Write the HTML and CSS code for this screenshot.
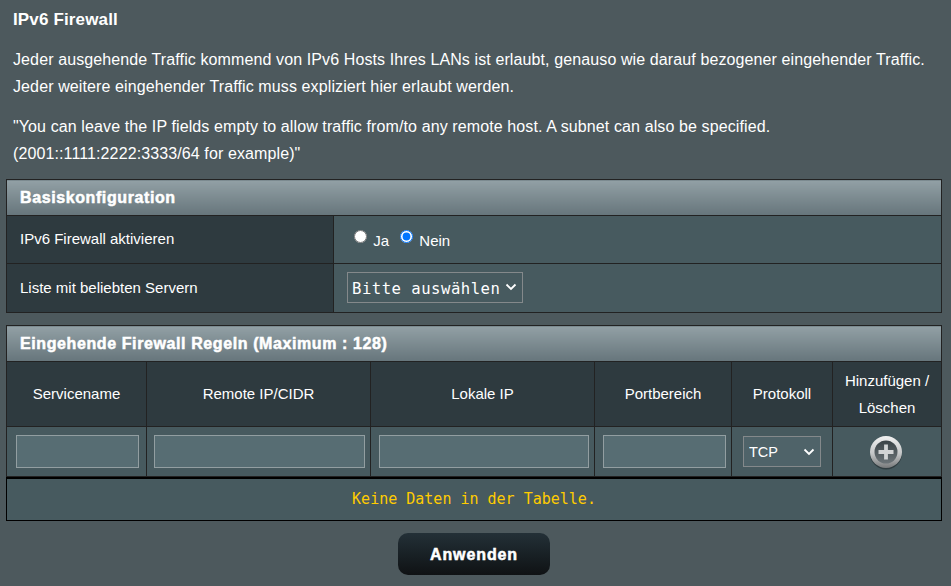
FILE: index.html
```html
<!DOCTYPE html>
<html>
<head>
    <title>IPv6 Firewall</title>
    <link rel="stylesheet" href="styles.css">
</head>
<body>
    <div class="page">
        <div class="page-title">IPv6 Firewall</div>
        <div class="intro">
            <p>Jeder ausgehende Traffic kommend von IPv6 Hosts Ihres LANs ist erlaubt, genauso wie darauf bezogener eingehender Traffic.<br>Jeder weitere eingehender Traffic muss expliziert hier erlaubt werden.</p>
            <p>"You can leave the IP fields empty to allow traffic from/to any remote host. A subnet can also be specified.<br>(2001::1111:2222:3333/64 for example)"</p>
        </div>

        <table class="form-table basic-table">
            <colgroup>
                <col class="col-label"><col>
            </colgroup>
            <thead>
                <tr><td class="table-head" colspan="2">Basiskonfiguration</td></tr>
            </thead>
            <tr class="row-enable">
                <th>IPv6 Firewall aktivieren</th>
                <td>
                    <label class="radio"><input type="radio" name="fw_enable"> Ja</label>
                    <label class="radio"><input type="radio" name="fw_enable" checked> Nein</label>
                </td>
            </tr>
            <tr class="row-servers">
                <th>Liste mit beliebten Servern</th>
                <td>
                    <select class="server-select">
                        <option>Bitte auswählen</option>
                    </select>
                </td>
            </tr>
        </table>

        <table class="form-table rules-table">
            <colgroup>
                <col class="col-name"><col class="col-remote"><col class="col-local">
                <col class="col-port"><col class="col-proto"><col class="col-add">
            </colgroup>
            <thead>
                <tr><td class="table-head" colspan="6">Eingehende Firewall Regeln (Maximum : 128)</td></tr>
            </thead>
            <tr class="row-columns">
                <th>Servicename</th>
                <th>Remote IP/CIDR</th>
                <th>Lokale IP</th>
                <th>Portbereich</th>
                <th>Protokoll</th>
                <th>Hinzufügen / Löschen</th>
            </tr>
            <tr class="row-inputs">
                <td class="cell-input"><input type="text" class="text-input"></td>
                <td class="cell-input"><input type="text" class="text-input"></td>
                <td class="cell-input"><input type="text" class="text-input"></td>
                <td class="cell-input"><input type="text" class="text-input"></td>
                <td>
                    <select class="proto-select">
                        <option>TCP</option>
                        <option>UDP</option>
                        <option>BOTH</option>
                    </select>
                </td>
                <td>
                    <svg class="add-icon" width="36" height="36" viewBox="0 0 36 36">
                        <defs>
                            <linearGradient id="ring" x1="0" y1="0" x2="0" y2="1">
                                <stop offset="0" stop-color="#f2f2f2"/>
                                <stop offset="0.55" stop-color="#c4c6c7"/>
                                <stop offset="1" stop-color="#77797a"/>
                            </linearGradient>
                            <linearGradient id="face" x1="0" y1="0" x2="0" y2="1">
                                <stop offset="0" stop-color="#3a4347"/>
                                <stop offset="1" stop-color="#6c7478"/>
                            </linearGradient>
                        </defs>
                        <circle cx="18" cy="19.5" r="16" fill="#1e2628" opacity="0.55"/>
                        <circle cx="18" cy="18" r="16" fill="url(#ring)"/>
                        <circle cx="18" cy="18" r="11.5" fill="url(#face)"/>
                        <path d="M18 10.5v15M10.5 18h15" stroke="#d2d4d5" stroke-width="3.8" fill="none"/>
                    </svg>
                </td>
            </tr>
        </table>
        <div class="no-data">Keine Daten in der Tabelle.</div>

        <div class="apply-row">
            <button class="apply-button">Anwenden</button>
        </div>
    </div>
</body>
</html>
```

FILE: styles.css
```css
html, body { height: 100%; }
body { margin: 0; background: #4d595d; color: #fff; font-family: "Liberation Sans", Arial, sans-serif; font-size: 16px; overflow: hidden; }
.page { width: 936px; padding: 10px 6px 0; }
.page-title { font-size: 17px; font-weight: bold; line-height: 20px; padding-left: 7px; letter-spacing: 0.15px; }
.intro { padding-left: 7px; line-height: 27px; letter-spacing: 0.11px; }
.intro p { margin: 0; padding-top: 16px; white-space: nowrap; }
.intro p + p { padding-top: 13px; }

.form-table { width: 936px; border-collapse: collapse; table-layout: fixed; background: #475a5f; }
.form-table th, .form-table td { border: 1px solid #222; font-weight: normal; padding: 0; }
.basic-table { margin-top: 12px; }
.rules-table { margin-top: 12px; }
.form-table .table-head { height: 35px; padding-left: 13px; text-align: left; font-weight: bold; font-size: 16px; letter-spacing: 0.6px; color: #fff; background: linear-gradient(#92a0a5, #66757b); -webkit-text-stroke: 0.5px #fff; }

.col-label { width: 327px; }
.basic-table th { padding: 0 0 2px 13px; text-align: left; background: #2e3a3f; font-size: 15px; }
.basic-table td { padding-left: 13px; font-size: 15px; }
.row-enable { height: 48px; }
.row-servers { height: 49px; }
.basic-table .row-servers td { padding-bottom: 2px; }
.radio input { margin: 0 2px 0 7px; vertical-align: 3px; }
.radio + .radio input { margin-left: 7px; }
.server-select { appearance: none; box-sizing: border-box; display: block; width: 176px; height: 31px; padding: 4px 0 0 4px; background: #475a5f url("data:image/svg+xml,%3Csvg xmlns='http://www.w3.org/2000/svg' width='12' height='8'%3E%3Cpath d='M1.5 1.5 6 6l4.5-4.5' fill='none' stroke='%23fff' stroke-width='1.8'/%3E%3C/svg%3E") no-repeat right 5px center; color: #fff; border: 1px solid #84898b; border-radius: 0; font-family: "DejaVu Sans Mono", monospace; font-size: 15.6px; letter-spacing: 0.5px; }

.col-name { width: 140px; }
.col-remote, .col-local { width: 224px; }
.col-port { width: 137px; }
.col-proto { width: 101px; }
.row-columns { height: 65px; }
.row-columns th { background: #2e3a3f; font-size: 15px; line-height: 27px; text-align: center; padding: 0 8px 1px; }
.row-inputs { height: 50px; }
.row-inputs td { text-align: center; }
.form-table .cell-input { padding: 0 5px 0 8px; }
.form-table .cell-input:first-child { padding: 0 7px 0 9px; }
.form-table .cell-input:nth-child(2) { padding-left: 7px; }
.text-input { box-sizing: border-box; display: block; width: 100%; height: 33px; margin: 0; padding: 0 4px; background: #576d73; border: 1px solid #929ea1; }
.proto-select { appearance: none; box-sizing: border-box; width: 78px; height: 31px; padding: 0 0 0 5px; background: #4f6369 url("data:image/svg+xml,%3Csvg xmlns='http://www.w3.org/2000/svg' width='12' height='8'%3E%3Cpath d='M1.5 1.5 6 6l4.5-4.5' fill='none' stroke='%23fff' stroke-width='1.8'/%3E%3C/svg%3E") no-repeat right 5px center; color: #fff; border: 1px solid #84898b; border-radius: 0; font-family: "Liberation Sans", Arial, sans-serif; font-size: 14.5px; vertical-align: middle; }
.add-icon { display: block; margin: 0 auto; transform: translateX(-1px); }

.no-data { box-sizing: border-box; height: 44px; line-height: 41px; border: 1px solid #000; border-top-width: 2px; background: #475a5f; color: #ffcc00; font-family: "DejaVu Sans Mono", monospace; font-size: 15px; text-align: center; }

.apply-row { display: flex; justify-content: center; padding-top: 12px; }
.apply-button { width: 152px; height: 42px; padding: 2px 0 0; border: 0; border-radius: 10px; background: linear-gradient(#233037, #0f1214); color: #fff; font-family: "Liberation Sans", Arial, sans-serif; font-size: 16px; font-weight: bold; letter-spacing: 0.9px; -webkit-text-stroke: 0.5px #fff; }
```
